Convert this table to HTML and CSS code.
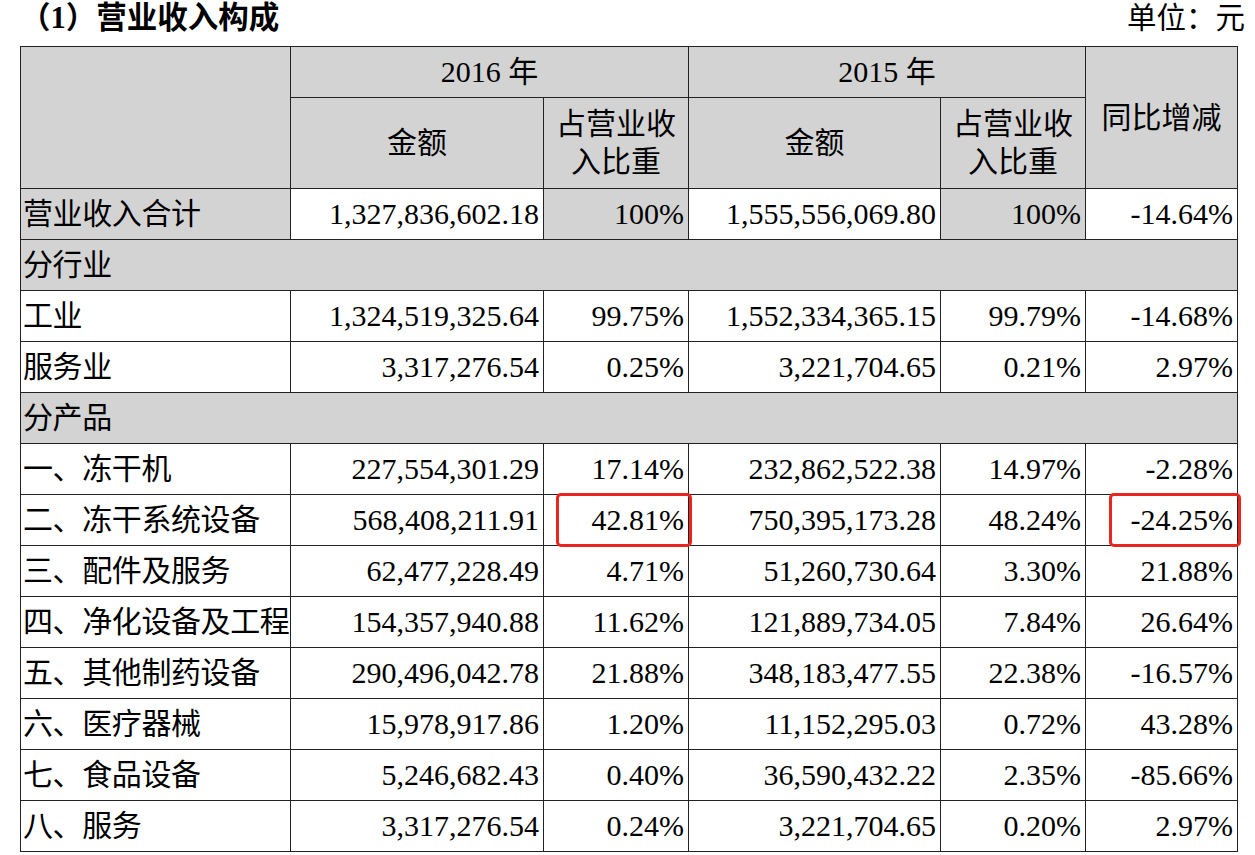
FILE: index.html
```html
<!DOCTYPE html>
<html lang="zh-CN">
<head>
<meta charset="utf-8">
<title>营业收入构成</title>
<link rel="stylesheet" href="styles.css">
</head>
<body>
<div class="page">
  <div class="heading">
    <div class="title">（1）营业收入构成</div>
    <div class="unit">单位：元</div>
  </div>
  <table class="rev">
    <colgroup>
      <col class="c1"><col class="c2"><col class="c3"><col class="c4"><col class="c5"><col class="c6">
    </colgroup>
    <thead>
      <tr class="h1">
        <th class="g" rowspan="2"></th>
        <th class="g" colspan="2">2016 年</th>
        <th class="g" colspan="2">2015 年</th>
        <th class="g" rowspan="2">同比增减</th>
      </tr>
      <tr class="h2">
        <th class="g">金额</th>
        <th class="g">占营业收<br>入比重</th>
        <th class="g">金额</th>
        <th class="g">占营业收<br>入比重</th>
      </tr>
    </thead>
    <tbody>
      <tr>
        <td class="g lbl">营业收入合计</td>
        <td class="num">1,327,836,602.18</td>
        <td class="num g">100%</td>
        <td class="num">1,555,556,069.80</td>
        <td class="num g">100%</td>
        <td class="num">-14.64%</td>
      </tr>
      <tr><td class="g lbl" colspan="6">分行业</td></tr>
      <tr>
        <td class="lbl">工业</td>
        <td class="num">1,324,519,325.64</td>
        <td class="num">99.75%</td>
        <td class="num">1,552,334,365.15</td>
        <td class="num">99.79%</td>
        <td class="num">-14.68%</td>
      </tr>
      <tr>
        <td class="lbl">服务业</td>
        <td class="num">3,317,276.54</td>
        <td class="num">0.25%</td>
        <td class="num">3,221,704.65</td>
        <td class="num">0.21%</td>
        <td class="num">2.97%</td>
      </tr>
      <tr><td class="g lbl" colspan="6">分产品</td></tr>
      <tr>
        <td class="lbl">一、冻干机</td>
        <td class="num">227,554,301.29</td>
        <td class="num">17.14%</td>
        <td class="num">232,862,522.38</td>
        <td class="num">14.97%</td>
        <td class="num">-2.28%</td>
      </tr>
      <tr>
        <td class="lbl">二、冻干系统设备</td>
        <td class="num">568,408,211.91</td>
        <td class="num mark"><span class="box box-a"></span>42.81%</td>
        <td class="num">750,395,173.28</td>
        <td class="num">48.24%</td>
        <td class="num mark"><span class="box box-b"></span>-24.25%</td>
      </tr>
      <tr>
        <td class="lbl">三、配件及服务</td>
        <td class="num">62,477,228.49</td>
        <td class="num">4.71%</td>
        <td class="num">51,260,730.64</td>
        <td class="num">3.30%</td>
        <td class="num">21.88%</td>
      </tr>
      <tr>
        <td class="lbl">四、净化设备及工程</td>
        <td class="num">154,357,940.88</td>
        <td class="num">11.62%</td>
        <td class="num">121,889,734.05</td>
        <td class="num">7.84%</td>
        <td class="num">26.64%</td>
      </tr>
      <tr>
        <td class="lbl">五、其他制药设备</td>
        <td class="num">290,496,042.78</td>
        <td class="num">21.88%</td>
        <td class="num">348,183,477.55</td>
        <td class="num">22.38%</td>
        <td class="num">-16.57%</td>
      </tr>
      <tr>
        <td class="lbl">六、医疗器械</td>
        <td class="num">15,978,917.86</td>
        <td class="num">1.20%</td>
        <td class="num">11,152,295.03</td>
        <td class="num">0.72%</td>
        <td class="num">43.28%</td>
      </tr>
      <tr>
        <td class="lbl">七、食品设备</td>
        <td class="num">5,246,682.43</td>
        <td class="num">0.40%</td>
        <td class="num">36,590,432.22</td>
        <td class="num">2.35%</td>
        <td class="num">-85.66%</td>
      </tr>
      <tr>
        <td class="lbl">八、服务</td>
        <td class="num">3,317,276.54</td>
        <td class="num">0.24%</td>
        <td class="num">3,221,704.65</td>
        <td class="num">0.20%</td>
        <td class="num">2.97%</td>
      </tr>
    </tbody>
  </table>
</div>
</body>
</html>
```

FILE: styles.css
```css
html, body {
  margin: 0;
  padding: 0;
  background: #ffffff;
}
body {
  font-family: "Liberation Serif", "Noto Sans CJK SC", serif;
  color: #000;
}
.page {
  padding: 0 0 0 20px;
}
.heading {
  display: flex;
  justify-content: space-between;
  align-items: center;
  width: 1225px;
  height: 46px;
}
.title {
  font-family: "Liberation Serif", "Noto Sans CJK SC", sans-serif;
  font-weight: bold;
  font-size: 30.5px;
  line-height: 34px;
  margin-top: -10px;
}
.unit {
  font-family: "Liberation Serif", "Noto Sans CJK SC", serif;
  font-size: 29.5px;
  line-height: 34px;
  margin-top: -10px;
}
.rev {
  border-collapse: collapse;
  table-layout: fixed;
  width: 1217px;
  font-size: 30px;
  line-height: 38px;
}
.c1 { width: 270px; }
.c2 { width: 253px; }
.c3 { width: 145px; }
.c4 { width: 252px; }
.c5 { width: 145px; }
.c6 { width: 152px; }
.rev th, .rev td {
  border: 1.5px solid #222222;
  padding: 0 4px;
  white-space: nowrap;
  overflow: visible;
}
.rev th {
  font-weight: normal;
  text-align: center;
  vertical-align: middle;
}
.h1 { height: 51px; }
.h2 { height: 91px; }
.rev tbody tr { height: 51px; }
.g { background: #d3d3d3; }
.rev .lbl {
  text-align: left;
  padding-left: 2px;
  letter-spacing: -0.4px;
}
.num { text-align: right; padding-right: 4px; }
.mark { position: relative; }
.box {
  position: absolute;
  border: 3px solid #e8261f;
  border-radius: 5px;
  top: -2px;
  bottom: -2px;
  right: -4px;
  pointer-events: none;
}
.box-a { left: 12px; }
.box-b { left: 23px; }
```
